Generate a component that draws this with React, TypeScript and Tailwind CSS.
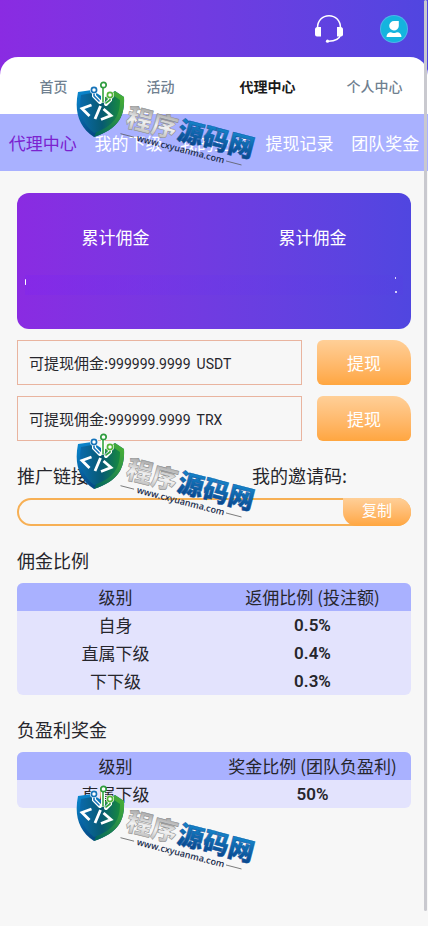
import { useId } from "react";

const font =
  "font-['Noto_Sans_CJK_SC','Noto_Sans_CJK_TC',sans-serif]";

const mainNav = ["首页", "活动", "代理中心", "个人中心"];
const subNav = ["代理中心", "我的下级", "我的业绩", "提现记录", "团队奖金"];

const balances = [
  { amount: "999999.9999", coin: "USDT" },
  { amount: "999999.9999", coin: "TRX" },
];

const commission = [
  { level: "自身", rate: "0.5%" },
  { level: "直属下级", rate: "0.4%" },
  { level: "下下级", rate: "0.3%" },
];

const bonus = [{ level: "直属下级", rate: "50%" }];

function HeadsetIcon() {
  return (
    <svg viewBox="0 0 28 28" className="size-7" fill="none" stroke="white">
      <path d="M2.500 13C2.500 5.500 7.500 .800 14 .800S25.500 5.500 25.500 13" strokeWidth="1.500" />
      <path d="M25.500 20c-1 3.800-5 6-12 6.200" strokeWidth="1.400" />
      <path d="M6 12v9.500H2A2 2 0 0 1 0 19.500V14.500A2.500 2.500 0 0 1 2.500 12z" fill="white" stroke="none" />
      <path d="M22 12v9.500h4a2 2 0 0 0 2-2V14.500A2.500 2.500 0 0 0 25.500 12z" fill="white" stroke="none" />
      <circle cx="12.500" cy="26.200" r="1.600" fill="white" stroke="none" />
    </svg>
  );
}

function AvatarIcon() {
  return (
    <svg viewBox="0 0 28 28" className="size-7">
      <circle cx="14" cy="14" r="14" fill="#4fb3ea" />
      <circle cx="14" cy="14" r="13" fill="#14b4de" />
      <path d="M14 6h4.800v5a4.800 4.800 0 1 1-4.800-5z" fill="white" />
      <path d="M6.500 22c0-3 2-4.800 4.500-4.800 1.200.900 4.800.900 6 0 2.500 0 4.500 1.800 4.500 4.800z" fill="white" />
    </svg>
  );
}

function Watermark({ className }: { className: string }) {
  const id = useId().replace(/[^a-zA-Z0-9]/g, "");
  return (
    <svg
      viewBox="0 0 200 100"
      className={`pointer-events-none absolute left-[75px] h-[100px] w-[200px] ${className}`}
      aria-hidden="true"
    >
      <defs>
        <linearGradient id={`${id}b`} x1="0" y1="0" x2="0.500" y2="1">
          <stop offset="0" stopColor="#0b8ad2" />
          <stop offset="1" stopColor="#04427c" />
        </linearGradient>
        <linearGradient id={`${id}g`} x1="1" y1="0" x2="0.200" y2="1">
          <stop offset="0" stopColor="#4db533" />
          <stop offset="1" stopColor="#056a5c" />
        </linearGradient>
        <linearGradient id={`${id}i`} x1="0" y1="0" x2="1" y2="0">
          <stop offset="0" stopColor="#0a69ab" />
          <stop offset="0.550" stopColor="#075a72" />
          <stop offset="1" stopColor="#178a3f" />
        </linearGradient>
        <linearGradient id={`${id}t`} x1="0" y1="0" x2="0" y2="1">
          <stop offset="0.200" stopColor="#1586cc" />
          <stop offset="1" stopColor="#083a80" />
        </linearGradient>
        <linearGradient id={`${id}s`} x1="0" y1="0" x2="0" y2="1">
          <stop offset="0.200" stopColor="#a4a4a4" />
          <stop offset="0.600" stopColor="#f2f2f2" />
          <stop offset="1" stopColor="#a8a8a8" />
        </linearGradient>
      </defs>

      {/* shield */}
      <path d="M3 11 17 9 29 17 40 10 49 16C50 36 43 48 19 56 4 46-1 31 3 11z" fill={`url(#${id}b)`} />
      <path d="M29 17 40 10 49 16C50 36 43 48 19 56L25 42z" fill={`url(#${id}g)`} />
      <path d="M6 14 17 12 29 20 39 15 45 19C45 35 39 45 19 52 7 42 3 31 6 14z" fill={`url(#${id}i)`} />

      {/* circuit */}
      <g fill="none" strokeLinecap="round">
        <path d="M28 6v14M19 11v4l6 6M35 16v3l-4 4" stroke="white" strokeWidth="4" />
        <path d="M19 11v4l5 5" stroke="#1673b9" strokeWidth="1.600" />
        <path d="M28 6v15M35 16v3l-4 3" stroke="#35a641" strokeWidth="1.600" />
        <circle cx="19" cy="9" r="4" fill="white" />
        <circle cx="35" cy="14" r="4" fill="white" />
        <circle cx="19" cy="9" r="2.600" fill="white" stroke="#1673b9" strokeWidth="1.700" />
        <circle cx="28.500" cy="4" r="2.700" fill="white" stroke="#2f9c3f" strokeWidth="1.700" />
        <circle cx="35" cy="14" r="2.600" fill="white" stroke="#55b53a" strokeWidth="1.700" />
      </g>

      {/* code mark */}
      <path
        d="M16.500 24 7 27.500l7.500 7.500M25.500 25l-5.500 13M28.500 28l7.500 6.500-10 4"
        fill="none"
        stroke="white"
        strokeWidth="2.800"
      />

      <g transform="translate(48 43) rotate(14.500)">
        <g className="font-['Noto_Sans_CJK_SC',sans-serif] font-black">
          <text x="2" y="1" fontSize="26" fill={`url(#${id}s)`} stroke="#8a8a8a" strokeWidth="0.500">
            程序
          </text>
          <text x="55" y="1" fontSize="26" fill={`url(#${id}t)`} stroke="#0b55a0" strokeWidth="0.500">
            源码网
          </text>
        </g>
        <text x="17" y="13" fontSize="9" fill="#1b2d4d" className="font-['Open_Sans',sans-serif] font-semibold">
          www.cxyuanma.com
        </text>
        <path d="M0 10h14M109 10h16" stroke="#555" strokeWidth="0.700" />
      </g>
    </svg>
  );
}

interface RateTableProps {
  title: string;
  rateLabel: string;
  rows: { level: string; rate: string }[];
}

function RateTable({ title, rateLabel, rows }: RateTableProps) {
  return (
    <section>
      <h2 className="text-lg leading-7">{title}</h2>
      <table className="mt-[9px] w-full table-fixed overflow-hidden rounded-md bg-[#e3e3fd] text-center text-[17px] leading-7">
        <thead className="bg-[#a9b1ff]">
          <tr>
            <th className="p-0 font-normal">级别</th>
            <th className="p-0 font-normal">{rateLabel}</th>
          </tr>
        </thead>
        <tbody>
          {rows.map((row) => (
            <tr key={row.level}>
              <td className="p-0">{row.level}</td>
              <td className="p-0 font-['Roboto',sans-serif] font-semibold">{row.rate}</td>
            </tr>
          ))}
        </tbody>
      </table>
    </section>
  );
}

export default function App() {
  return (
    <div className={`relative min-h-screen bg-[#f7f7f7] text-[#26262c] ${font}`}>
      <header className="bg-gradient-to-r from-[#8a2be2] to-[#5046e0]">
        <div className="flex h-[57px] items-center justify-end gap-[37px] pr-5">
          <button aria-label="客服">
            <HeadsetIcon />
          </button>
          <button aria-label="个人">
            <AvatarIcon />
          </button>
        </div>
        <nav className="grid h-[57px] grid-cols-4 items-center rounded-t-[18px] bg-white text-center text-sm">
          {mainNav.map((item) => (
            <a
              key={item}
              href="#"
              className={item === "代理中心" ? "font-bold text-[#1a1a1a]" : "font-medium text-[#708090]"}
            >
              {item}
            </a>
          ))}
        </nav>
      </header>

      <nav className="grid h-[57px] grid-cols-5 items-center bg-[#a9b1ff] text-center text-[17px] whitespace-nowrap text-white">
        {subNav.map((item, i) => (
          <a key={item} href="#" className={i === 0 ? "text-[#7b22cf]" : ""}>
            {item}
          </a>
        ))}
      </nav>

      <main className="px-[17px] pt-[22px]">
        <div className="h-[136px] rounded-xl bg-gradient-to-r from-[#8a2be2] to-[#5046e0] pt-[30px] text-white">
          <div className="grid grid-cols-2 text-center text-[17px] leading-7">
            <span>累计佣金</span>
            <span>累计佣金</span>
          </div>
          {/* masked amounts */}
          <div className="mx-2 mt-6 flex h-5 justify-between bg-gradient-to-r from-[#8226ec]/50 to-[#5342e2]/50">
            <span className="mt-1 h-1.5 w-px rounded-full bg-white" />
            <span className="mr-1.5 flex flex-col justify-between py-0.5">
              <span className="h-0.5 w-px bg-white/80" />
              <span className="size-0.5 rounded-full bg-white" />
            </span>
          </div>
        </div>

        <div className="mt-[11px] grid gap-[11px]">
          {balances.map((b) => (
            <div key={b.coin} className="flex h-[45px] gap-[15px]">
              <div className="flex flex-1 items-center border border-[#e9b49f] px-[11px] pt-0.5 text-[15px]">
                可提现佣金:
                <span className="flex gap-1.5 font-['Roboto',sans-serif] text-sm">
                  <span>{b.amount}</span>
                  <span>{b.coin}</span>
                </span>
              </div>
              <button className="w-[94px] rounded-md rounded-tr-[18px] bg-gradient-to-b from-[#ffcf97] to-[#ffa63f] text-[17px] text-white">
                提现
              </button>
            </div>
          ))}
        </div>

        <div className="mt-5 flex text-lg leading-7">
          <label htmlFor="promo" className="w-[235px]">
            推广链接:
          </label>
          <span>我的邀请码:</span>
        </div>
        <div className="mt-[9px] flex h-7 rounded-full border-2 border-[#f7b055]">
          <input
            id="promo"
            readOnly
            className="min-w-0 flex-1 rounded-l-full bg-transparent px-3 text-sm outline-none"
          />
          <button className="-my-0.5 -mr-0.5 w-[68px] rounded-r-[14px] rounded-bl-[14px] bg-gradient-to-b from-[#ffcf97] to-[#ffa63f] pb-1 text-[15px] leading-5 text-white">
            复制
          </button>
        </div>

        <div className="mt-5 grid gap-5">
          <RateTable title="佣金比例" rateLabel="返佣比例 (投注额)" rows={commission} />
          <RateTable title="负盈利奖金" rateLabel="奖金比例 (团队负盈利)" rows={bonus} />
        </div>
      </main>

      <Watermark className="top-[81px]" />
      <Watermark className="top-[433px]" />
      <Watermark className="top-[785px]" />

      <div className="absolute top-0 right-px h-[911px] w-[3px] rounded-full bg-[#c9c9cf]" />
    </div>
  );
}
